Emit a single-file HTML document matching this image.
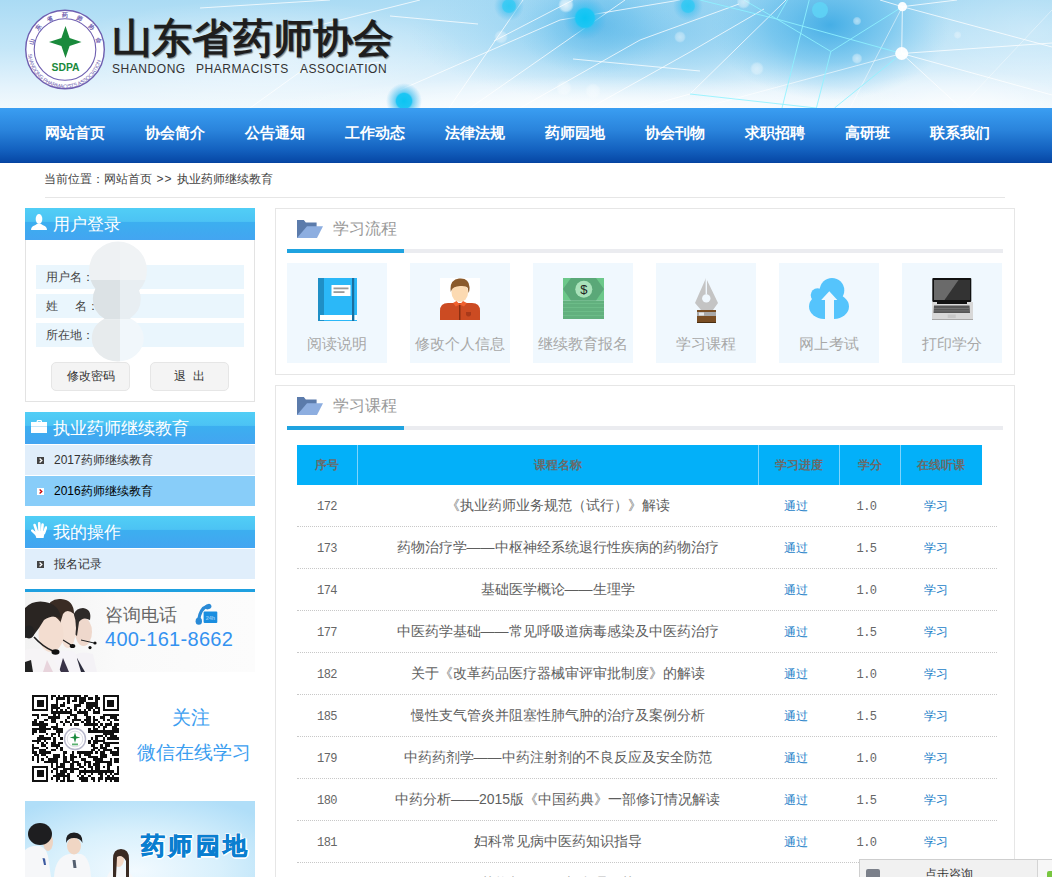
<!DOCTYPE html>
<html><head><meta charset="utf-8">
<style>
*{margin:0;padding:0;box-sizing:border-box}
html,body{width:1052px;height:877px;overflow:hidden;background:#fff;font-family:"Liberation Sans",sans-serif;color:#333;font-size:12px}
.abs{position:absolute}
#banner{position:absolute;left:0;top:0;width:1052px;height:108px;overflow:hidden;
background:linear-gradient(180deg,#a9daf5 0%,#c4e6f8 55%,#eaf6fd 100%)}
#nav{position:absolute;left:0;top:108px;width:1052px;height:55px;
background:linear-gradient(180deg,#3a9ef2 0%,#2a84dc 40%,#1462c0 75%,#0748a6 98%,#04409c 100%)}
#nav span{position:absolute;top:16px;color:#fff;font-size:15px;font-weight:bold;line-height:18px;white-space:nowrap}
.crumb{position:absolute;left:44px;top:171px;font-size:12px;color:#444;line-height:16px}
.crumbline{position:absolute;left:45px;top:197px;width:960px;height:1px;background:#e6e6e6}
.shead{position:absolute;left:25px;width:230px;height:32px;
background:linear-gradient(180deg,#51cef6 0%,#4cc3f4 42%,#3caff0 44%,#3faaf0 70%,#43a5f1 100%)}
.shead .t{position:absolute;left:28px;top:6px;color:#fff;font-size:17px;line-height:22px;white-space:nowrap}
.item{position:absolute;left:25px;width:230px;height:30px;background:#e0eefb}
.item .t{position:absolute;left:29px;top:8px;font-size:12px;line-height:14px;color:#333;white-space:nowrap}
.item .b{position:absolute;left:12px;top:12px}
.fr{position:absolute;left:36px;width:208px;height:24px;background:#eaf6fd}
.fr span{position:absolute;top:5px;font-size:12px;line-height:14px;color:#444;white-space:nowrap}
.btn{position:absolute;top:362px;width:79px;height:29px;border:1px solid #e6e6e6;border-radius:5px;background:#f4f4f4;text-align:center;font-size:12px;line-height:27px;color:#333}
.box{position:absolute;left:275px;width:740px;border:1px solid #e6e6e6;background:#fff}
.tile{position:absolute;top:263px;width:100px;height:100px;background:#f0f8fe}
.tile .l{position:absolute;left:0;width:100px;top:73px;text-align:center;font-size:14.5px;color:#a8a8a8;line-height:16px;white-space:nowrap}
table{border-collapse:collapse}
.th{position:absolute;top:458px;text-align:center;font-size:12px;font-weight:bold;color:#6a6a6a;line-height:14px}
.tr{position:absolute;left:297px;width:700px;height:42px;border-bottom:1px dotted #c8c8c8}
.td{position:absolute;top:14px;font-size:12px;line-height:14px;text-align:center;white-space:nowrap}
.td.n{left:0;width:60px;font-family:"Liberation Mono",monospace;font-size:12px;letter-spacing:-0.5px;top:15px;color:#666}
.td.nm{left:60px;width:401px;color:#5e5e5e;font-size:14px;top:12px;line-height:16px}
.td.p{left:458px;width:81px;color:#1a7ec8}
.td.c{left:539px;width:61px;font-family:"Liberation Mono",monospace;font-size:12px;letter-spacing:-0.5px;top:15px;color:#666}
.td.s{left:598px;width:82px;color:#1a7ec8}
.sub{position:absolute;top:62px;font-size:12px;line-height:14px;letter-spacing:0.55px;color:#333;white-space:nowrap}
</style></head>
<body>
<div id="banner"><svg width="1052" height="108" viewBox="0 0 1052 108" style="position:absolute;left:0;top:0">
<defs>
<linearGradient id="bgv" x1="0" y1="0" x2="0" y2="1">
<stop offset="0" stop-color="#aadbf4"/><stop offset="0.45" stop-color="#c4e6f8"/><stop offset="0.8" stop-color="#e4f3fc"/><stop offset="1" stop-color="#f2f9fd"/></linearGradient>
<radialGradient id="rb1" cx="0.5" cy="0.5" r="0.5"><stop offset="0" stop-color="#3aa9e4" stop-opacity="0.95"/><stop offset="0.5" stop-color="#55b8ea" stop-opacity="0.6"/><stop offset="1" stop-color="#7ccaf0" stop-opacity="0"/></radialGradient>
<radialGradient id="rw" cx="0.5" cy="0.5" r="0.5"><stop offset="0" stop-color="#ffffff" stop-opacity="0.95"/><stop offset="1" stop-color="#ffffff" stop-opacity="0"/></radialGradient>
<radialGradient id="dot" cx="0.5" cy="0.5" r="0.5"><stop offset="0" stop-color="#0cc4f2"/><stop offset="0.42" stop-color="#1ec6f4"/><stop offset="0.5" stop-color="#3cc0f0" stop-opacity="0.7"/><stop offset="1" stop-color="#50b8ee" stop-opacity="0"/></radialGradient>
<radialGradient id="wdot" cx="0.5" cy="0.5" r="0.5"><stop offset="0" stop-color="#fff" stop-opacity="0.75"/><stop offset="0.7" stop-color="#fff" stop-opacity="0.5"/><stop offset="1" stop-color="#fff" stop-opacity="0"/></radialGradient>
</defs>
<rect width="1052" height="108" fill="url(#bgv)"/>
<ellipse cx="640" cy="35" rx="230" ry="70" fill="url(#rb1)" opacity="0.45"/>
<ellipse cx="830" cy="25" rx="120" ry="75" fill="url(#rb1)" opacity="0.95"/>
<ellipse cx="595" cy="25" rx="80" ry="50" fill="url(#rb1)" opacity="0.55"/>
<ellipse cx="1030" cy="30" rx="110" ry="70" fill="url(#rw)" opacity="0.25"/>
<ellipse cx="260" cy="55" rx="210" ry="55" fill="url(#rw)" opacity="0.5"/>
<ellipse cx="600" cy="116" rx="360" ry="40" fill="url(#rw)" opacity="0.95"/>
<ellipse cx="960" cy="110" rx="120" ry="40" fill="url(#rw)" opacity="0.8"/>
<g stroke="#ffffff" stroke-opacity="0.75" stroke-width="1" fill="none">
<path d="M449 108L523 0"/><path d="M470 108L625 0"/><path d="M400 90L560 20L680 0"/>
<path d="M390 16L478 24"/><path d="M573 59L700 71"/><path d="M494 41L573 0"/>
<path d="M520 108L640 40L739 4"/><path d="M590 108L690 52L764 9"/>
<path d="M640 108L690 94L786 0"/>
<path d="M300 30L420 0"/><path d="M200 8L330 0"/><path d="M250 108L300 72L380 62"/>
<path d="M902.4 6.7L1052 47"/><path d="M902.4 6.7L880 0"/><path d="M902.4 6.7L957 0"/><path d="M902.4 6.7L901.7 53.5"/>
<path d="M901.7 53.5L961 108"/><path d="M901.7 53.5L1052 43"/><path d="M901.7 53.5L1052 95"/>
<path d="M902.4 6.7L850 108" stroke-opacity="0.5"/><path d="M960 108L1052 10" stroke-opacity="0.4"/>
<path d="M700 108L901.7 53.5" stroke-opacity="0.6"/>
</g>
<g stroke="#8ef2ff" stroke-opacity="0.85" stroke-width="1" fill="none">
<path d="M776.7 19L901.7 53.5"/><path d="M776.7 19L744 0"/><path d="M776.7 19L787.5 0"/><path d="M776.7 19L830.9 51.5"/>
<path d="M830.9 51.5L902.4 6.7"/><path d="M830.9 51.5L816.4 108"/><path d="M809.2 0L782 108"/>
<path d="M690 94L816 108"/><path d="M834.5 108L901.7 53.5"/><path d="M700 0L776.7 19"/>
</g>
<circle cx="585" cy="18" r="22" fill="url(#dot)"/>
<circle cx="509" cy="6" r="15" fill="url(#dot)" opacity="0.75"/>
<circle cx="688" cy="6" r="15" fill="url(#dot)" opacity="0.75"/>
<circle cx="404" cy="101" r="18" fill="url(#dot)"/>
<circle cx="820" cy="10" r="8" fill="#5fd6f6" fill-opacity="0.8"/>
<circle cx="902.4" cy="6.7" r="4.6" fill="#fff" fill-opacity="0.95"/>
<circle cx="901.7" cy="53.5" r="6.5" fill="#fff" fill-opacity="0.95"/>
<circle cx="566" cy="5" r="8" fill="url(#wdot)"/><circle cx="501" cy="37" r="7" fill="url(#wdot)" opacity="0.6"/>
<circle cx="680" cy="37" r="6" fill="url(#wdot)" opacity="0.6"/><circle cx="564" cy="88" r="8" fill="url(#wdot)" opacity="0.6"/>
<circle cx="593" cy="91" r="8" fill="url(#wdot)" opacity="0.5"/><circle cx="757" cy="68.6" r="7" fill="url(#wdot)" opacity="0.6"/>
<circle cx="857" cy="21" r="4.5" fill="url(#wdot)" opacity="0.7"/><circle cx="857" cy="58.5" r="5.5" fill="url(#wdot)" opacity="0.7"/>
<circle cx="743.5" cy="2" r="7" fill="url(#wdot)" opacity="0.7"/><circle cx="957.6" cy="35" r="4" fill="url(#wdot)" opacity="0.5"/>
</svg>
<!-- logo -->
<svg style="position:absolute;left:25px;top:9px" width="81" height="81" viewBox="0 0 81 81">
<circle cx="40" cy="40.5" r="39.3" fill="#fff" stroke="#6f5fb0" stroke-width="1.4"/>
<circle cx="40" cy="40.5" r="30.8" fill="none" stroke="#6f5fb0" stroke-width="1.1"/>
<path d="M40.5 17L44.6 28.9L56.5 33L44.6 37.1L40.5 49L36.4 37.1L24 33L36.4 28.9z" fill="#1a8a3c"/>
<text x="40.5" y="61.8" text-anchor="middle" font-family="Liberation Sans" font-size="11.5" font-weight="bold" textLength="28" lengthAdjust="spacingAndGlyphs" fill="#1a8a3c">SDPA</text>
<g fill="#6f5fb0" font-family="Liberation Sans" font-size="6" font-weight="bold" text-anchor="middle"><text x="0" y="2.2" transform="translate(6.23 32.08) rotate(-76)">山</text><text x="0" y="2.2" transform="translate(12.96 18.60) rotate(-51)">东</text><text x="0" y="2.2" transform="translate(24.74 9.22) rotate(-26)">省</text><text x="0" y="2.2" transform="translate(40.00 5.70) rotate(0)">药</text><text x="0" y="2.2" transform="translate(54.71 8.96) rotate(25)">师</text><text x="0" y="2.2" transform="translate(66.66 18.13) rotate(50)">协</text><text x="0" y="2.2" transform="translate(73.61 31.49) rotate(75)">会</text></g>
<path id="arcp" d="M2.8 42A37.2 37.2 0 0 0 77.2 42" fill="none"/>
<text font-family="Liberation Sans" font-size="5.4" fill="#6f5fb0"><textPath href="#arcp" startOffset="3" textLength="104" lengthAdjust="spacing">SHANDONG PHARMACISTS ASSOCIATION</textPath></text>
</svg>
<div style="position:absolute;left:112px;top:14px;font-size:40px;line-height:48px;font-weight:bold;color:#1e1e1e;letter-spacing:0.2px;white-space:nowrap;text-shadow:1px 1px 1px rgba(0,0,0,0.45)">山东省药师协会</div>
<div class="sub" style="left:112px">SHANDONG</div><div class="sub" style="left:196px">PHARMACISTS</div><div class="sub" style="left:300px">ASSOCIATION</div>
</div>
<div id="nav">
<span style="left:45px">网站首页</span>
<span style="left:145px">协会简介</span>
<span style="left:245px">公告通知</span>
<span style="left:345px">工作动态</span>
<span style="left:445px">法律法规</span>
<span style="left:545px">药师园地</span>
<span style="left:645px">协会刊物</span>
<span style="left:745px">求职招聘</span>
<span style="left:845px">高研班</span>
<span style="left:930px">联系我们</span>
</div>
<div class="crumb">当前位置：网站首页<span style="display:inline-block;width:25px;text-align:center;letter-spacing:1px">&gt;&gt;</span>执业药师继续教育</div>
<div class="crumbline"></div>

<!-- sidebar -->
<div class="shead" style="top:208px"><div class="t">用户登录</div></div>
<div class="abs" style="left:25px;top:240px;width:230px;height:162px;border:1px solid #e3e3e3;border-top:none"></div>

<div class="shead" style="top:412px"><div class="t">执业药师继续教育</div></div>
<div class="item" style="top:445px"><svg class="b" width="7" height="7" viewBox="0 0 7 7"><rect width="7" height="7" fill="#444"/><path d="M2.6 1.5L4.8 3.5L2.6 5.5" fill="none" stroke="#fff" stroke-width="1.3"/></svg><div class="t">2017药师继续教育</div></div>
<div class="item" style="top:476px;background:#88cdf9"><svg class="b" width="7" height="7" viewBox="0 0 7 7"><rect width="7" height="7" fill="#fff"/><path d="M2.6 1.5L4.8 3.5L2.6 5.5" fill="none" stroke="#c00" stroke-width="1.3"/></svg><div class="t" style="color:#000">2016药师继续教育</div></div>

<div class="shead" style="top:516px"><div class="t">我的操作</div></div>
<div class="item" style="top:549px"><svg class="b" width="7" height="7" viewBox="0 0 7 7"><rect width="7" height="7" fill="#444"/><path d="M2.6 1.5L4.8 3.5L2.6 5.5" fill="none" stroke="#fff" stroke-width="1.3"/></svg><div class="t">报名记录</div></div>

<!-- main -->
<div class="box" style="top:208px;height:167px"></div>
<div class="box" style="top:385px;height:500px"></div>


<!-- sidebar icons -->
<svg class="abs" style="left:31px;top:214px" width="16" height="16" viewBox="0 0 16 16">
<ellipse cx="8" cy="5" rx="3.3" ry="5" fill="#fff"/>
<path d="M0 16Q0 12.5 4 11.2L6.3 9.8H9.7L12 11.2Q16 12.5 16 16z" fill="#fff"/>
</svg>
<svg class="abs" style="left:31px;top:420px" width="16" height="13" viewBox="0 0 16 13">
<rect x="6.2" y="0.6" width="4.2" height="2.4" rx="0.8" fill="none" stroke="#fff" stroke-width="1.2"/>
<rect x="0" y="2" width="16" height="11" fill="#fff"/>
<rect x="0" y="6.2" width="16" height="0.8" fill="#b8e0f8"/>
</svg>
<svg class="abs" style="left:31px;top:522px" width="16" height="16" viewBox="0 0 16 16">
<g stroke="#fff" stroke-width="2.6" stroke-linecap="round">
<line x1="1.3" y1="8.6" x2="5.5" y2="12.5"/><line x1="3.6" y1="3" x2="6" y2="10"/>
<line x1="8.2" y1="1.3" x2="8.5" y2="9"/><line x1="11.6" y1="2.6" x2="11" y2="9"/>
<line x1="15" y1="5.5" x2="13" y2="11"/></g>
<path d="M4.6 9H13.8L12.6 16H5.3L4 11.5z" fill="#fff"/>
</svg>
<!-- login fields -->
<div class="fr" style="top:265px"><span style="left:10px">用户名：</span></div>
<div class="fr" style="top:294px"><span style="left:10px">姓</span><span style="left:39px">名：</span></div>
<div class="fr" style="top:323px"><span style="left:10px">所在地：</span></div>
<svg class="abs" style="left:85px;top:238px" width="65" height="126" viewBox="85 238 65 126">
<defs><clipPath id="blob"><circle cx="118" cy="270.5" r="29"/><ellipse cx="116.8" cy="299" rx="24" ry="23"/><ellipse cx="117.8" cy="338.5" rx="26" ry="23"/></clipPath></defs>
<g clip-path="url(#blob)">
<rect x="85" y="238" width="35" height="42" fill="#eef1f3"/><rect x="120" y="238" width="35" height="42" fill="#f0f3f5"/>
<rect x="85" y="280" width="35" height="39.5" fill="#dce2e5"/><rect x="120" y="280" width="35" height="39.5" fill="#e8eef2"/>
<rect x="85" y="319.5" width="35" height="50" fill="#e7ebed"/><rect x="120" y="319.5" width="35" height="50" fill="#f1f7fb"/>
</g></svg>
<div class="btn" style="left:51px">修改密码</div>
<div class="btn" style="left:150px">退&nbsp;&nbsp;出</div>

<!-- phone banner -->
<div class="abs" style="left:25px;top:589px;width:230px;height:3.5px;background:#1fa0e0"></div>
<div class="abs" style="left:25px;top:592px;width:230px;height:80px;background:linear-gradient(90deg,#f2f2f2 0%,#fafafa 40%,#fcfcfc 100%);overflow:hidden">
<svg width="230" height="80" viewBox="0 0 230 80" style="position:absolute;left:0;top:0">
<!-- person 3 (back, right) -->
<path d="M44 80L48 64Q56 58 68 62L72 80z" fill="#f4f2f6"/>
<path d="M48 80L52 66L60 80z" fill="#2c2c3c"/>
<ellipse cx="58.5" cy="40" rx="8.5" ry="14" fill="#efd8cc"/>
<path d="M47 40Q45 16 58 16Q67 17 65 28Q58 24 54 30L52 44z" fill="#2e2a28"/>
<path d="M56 48L69 51" stroke="#222" stroke-width="1" fill="none"/><circle cx="70" cy="51" r="1.6" fill="#111"/><circle cx="65" cy="55.6" r="1.6" fill="#111"/>
<!-- person 2 -->
<path d="M22 80L26 64Q36 56 50 60L56 80z" fill="#f6f4f8"/>
<path d="M34 80L38 66L44 80z" fill="#3a3448"/>
<ellipse cx="43" cy="36" rx="8" ry="20" fill="#f4e0d4"/>
<path d="M22 18Q24 6 36 7Q49 8 49 22Q42 16 38 22L35 32z" fill="#3a2c24"/>
<path d="M38 48L46 53" stroke="#222" stroke-width="1.2" fill="none"/><ellipse cx="47.5" cy="54" rx="2.8" ry="2" fill="#111"/>
<!-- person 1 (front, left) -->
<path d="M0 80V58Q10 54 24 60L36 80z" fill="#f6f4f6"/>
<path d="M0 80V70L6 68L8 80z" fill="#222"/><path d="M18 80L22 68L28 80z" fill="#e8d4dc"/>
<ellipse cx="26" cy="42" rx="12.5" ry="18" fill="#f3ddd0"/>
<path d="M0 36V16Q8 8 20 10Q34 12 36 26Q27 22 19 28L14 36L8 44L0 46z" fill="#2a2522"/>
<ellipse cx="4" cy="40" rx="5.5" ry="6.5" fill="#222"/>
<path d="M9 45Q18 55 28 59" stroke="#222" stroke-width="1.6" fill="none"/><ellipse cx="30.5" cy="60" rx="4" ry="2.8" fill="#111"/>
</svg>
<div style="position:absolute;left:80px;top:13px;font-size:17.5px;line-height:20px;color:#666;white-space:nowrap">咨询电话</div>
<svg style="position:absolute;left:170px;top:11px" width="24" height="23" viewBox="0 0 24 23">
<path d="M12.5 3Q5 5.5 3.6 17.5" fill="none" stroke="#2a8ad6" stroke-width="3.2"/>
<ellipse cx="13.2" cy="3.6" rx="3.3" ry="2.6" transform="rotate(-20 13.2 3.6)" fill="#2a8ad6"/>
<ellipse cx="3.8" cy="18.2" rx="3.2" ry="3.6" fill="#2a8ad6"/>
<rect x="8.6" y="8.4" width="13.7" height="11.6" rx="1" fill="#1a8ee0"/>
<text x="15.4" y="16.6" text-anchor="middle" font-family="Liberation Sans" font-size="5.5" font-weight="bold" fill="#8cc8f4">24h</text>
</svg>
<div style="position:absolute;left:80px;top:36px;font-size:20px;line-height:22px;color:#3492f0;letter-spacing:0.3px;white-space:nowrap">400-161-8662</div>
</div>
<!-- QR -->
<svg class="abs" style="left:32px;top:695px" width="87" height="87" viewBox="0 0 37 37" shape-rendering="crispEdges">
<path d="M0 0h1v1h-1zM1 0h1v1h-1zM2 0h1v1h-1zM3 0h1v1h-1zM4 0h1v1h-1zM5 0h1v1h-1zM6 0h1v1h-1zM8 0h1v1h-1zM9 0h1v1h-1zM11 0h1v1h-1zM13 0h1v1h-1zM14 0h1v1h-1zM15 0h1v1h-1zM16 0h1v1h-1zM17 0h1v1h-1zM18 0h1v1h-1zM19 0h1v1h-1zM20 0h1v1h-1zM22 0h1v1h-1zM23 0h1v1h-1zM27 0h1v1h-1zM30 0h1v1h-1zM31 0h1v1h-1zM32 0h1v1h-1zM33 0h1v1h-1zM34 0h1v1h-1zM35 0h1v1h-1zM36 0h1v1h-1zM0 1h1v1h-1zM6 1h1v1h-1zM8 1h1v1h-1zM10 1h1v1h-1zM11 1h1v1h-1zM12 1h1v1h-1zM13 1h1v1h-1zM15 1h1v1h-1zM18 1h1v1h-1zM20 1h1v1h-1zM21 1h1v1h-1zM22 1h1v1h-1zM24 1h1v1h-1zM25 1h1v1h-1zM27 1h1v1h-1zM28 1h1v1h-1zM30 1h1v1h-1zM36 1h1v1h-1zM0 2h1v1h-1zM2 2h1v1h-1zM3 2h1v1h-1zM4 2h1v1h-1zM6 2h1v1h-1zM10 2h1v1h-1zM15 2h1v1h-1zM17 2h1v1h-1zM18 2h1v1h-1zM20 2h1v1h-1zM21 2h1v1h-1zM22 2h1v1h-1zM27 2h1v1h-1zM30 2h1v1h-1zM32 2h1v1h-1zM33 2h1v1h-1zM34 2h1v1h-1zM36 2h1v1h-1zM0 3h1v1h-1zM2 3h1v1h-1zM3 3h1v1h-1zM4 3h1v1h-1zM6 3h1v1h-1zM10 3h1v1h-1zM13 3h1v1h-1zM15 3h1v1h-1zM20 3h1v1h-1zM21 3h1v1h-1zM23 3h1v1h-1zM24 3h1v1h-1zM25 3h1v1h-1zM26 3h1v1h-1zM27 3h1v1h-1zM30 3h1v1h-1zM32 3h1v1h-1zM33 3h1v1h-1zM34 3h1v1h-1zM36 3h1v1h-1zM0 4h1v1h-1zM2 4h1v1h-1zM3 4h1v1h-1zM4 4h1v1h-1zM6 4h1v1h-1zM8 4h1v1h-1zM9 4h1v1h-1zM10 4h1v1h-1zM12 4h1v1h-1zM13 4h1v1h-1zM18 4h1v1h-1zM19 4h1v1h-1zM20 4h1v1h-1zM23 4h1v1h-1zM24 4h1v1h-1zM25 4h1v1h-1zM26 4h1v1h-1zM27 4h1v1h-1zM30 4h1v1h-1zM32 4h1v1h-1zM33 4h1v1h-1zM34 4h1v1h-1zM36 4h1v1h-1zM0 5h1v1h-1zM6 5h1v1h-1zM8 5h1v1h-1zM9 5h1v1h-1zM10 5h1v1h-1zM11 5h1v1h-1zM15 5h1v1h-1zM18 5h1v1h-1zM23 5h1v1h-1zM24 5h1v1h-1zM25 5h1v1h-1zM27 5h1v1h-1zM28 5h1v1h-1zM30 5h1v1h-1zM36 5h1v1h-1zM0 6h1v1h-1zM1 6h1v1h-1zM2 6h1v1h-1zM3 6h1v1h-1zM4 6h1v1h-1zM5 6h1v1h-1zM6 6h1v1h-1zM8 6h1v1h-1zM10 6h1v1h-1zM12 6h1v1h-1zM14 6h1v1h-1zM16 6h1v1h-1zM18 6h1v1h-1zM20 6h1v1h-1zM22 6h1v1h-1zM24 6h1v1h-1zM26 6h1v1h-1zM28 6h1v1h-1zM30 6h1v1h-1zM31 6h1v1h-1zM32 6h1v1h-1zM33 6h1v1h-1zM34 6h1v1h-1zM35 6h1v1h-1zM36 6h1v1h-1zM8 7h1v1h-1zM9 7h1v1h-1zM10 7h1v1h-1zM11 7h1v1h-1zM12 7h1v1h-1zM13 7h1v1h-1zM14 7h1v1h-1zM15 7h1v1h-1zM16 7h1v1h-1zM19 7h1v1h-1zM20 7h1v1h-1zM21 7h1v1h-1zM22 7h1v1h-1zM23 7h1v1h-1zM26 7h1v1h-1zM27 7h1v1h-1zM28 7h1v1h-1zM0 8h1v1h-1zM1 8h1v1h-1zM2 8h1v1h-1zM4 8h1v1h-1zM5 8h1v1h-1zM6 8h1v1h-1zM9 8h1v1h-1zM11 8h1v1h-1zM16 8h1v1h-1zM17 8h1v1h-1zM18 8h1v1h-1zM22 8h1v1h-1zM23 8h1v1h-1zM30 8h1v1h-1zM31 8h1v1h-1zM32 8h1v1h-1zM33 8h1v1h-1zM34 8h1v1h-1zM35 8h1v1h-1zM36 8h1v1h-1zM2 9h1v1h-1zM7 9h1v1h-1zM8 9h1v1h-1zM9 9h1v1h-1zM10 9h1v1h-1zM11 9h1v1h-1zM15 9h1v1h-1zM18 9h1v1h-1zM23 9h1v1h-1zM24 9h1v1h-1zM26 9h1v1h-1zM29 9h1v1h-1zM30 9h1v1h-1zM33 9h1v1h-1zM34 9h1v1h-1zM35 9h1v1h-1zM1 10h1v1h-1zM5 10h1v1h-1zM6 10h1v1h-1zM8 10h1v1h-1zM9 10h1v1h-1zM14 10h1v1h-1zM17 10h1v1h-1zM18 10h1v1h-1zM19 10h1v1h-1zM20 10h1v1h-1zM22 10h1v1h-1zM23 10h1v1h-1zM24 10h1v1h-1zM26 10h1v1h-1zM27 10h1v1h-1zM30 10h1v1h-1zM32 10h1v1h-1zM35 10h1v1h-1zM36 10h1v1h-1zM0 11h1v1h-1zM1 11h1v1h-1zM3 11h1v1h-1zM4 11h1v1h-1zM8 11h1v1h-1zM9 11h1v1h-1zM12 11h1v1h-1zM14 11h1v1h-1zM15 11h1v1h-1zM17 11h1v1h-1zM21 11h1v1h-1zM23 11h1v1h-1zM24 11h1v1h-1zM26 11h1v1h-1zM28 11h1v1h-1zM33 11h1v1h-1zM0 12h1v1h-1zM1 12h1v1h-1zM2 12h1v1h-1zM3 12h1v1h-1zM4 12h1v1h-1zM5 12h1v1h-1zM6 12h1v1h-1zM10 12h1v1h-1zM13 12h1v1h-1zM16 12h1v1h-1zM18 12h1v1h-1zM19 12h1v1h-1zM22 12h1v1h-1zM23 12h1v1h-1zM24 12h1v1h-1zM25 12h1v1h-1zM26 12h1v1h-1zM27 12h1v1h-1zM29 12h1v1h-1zM31 12h1v1h-1zM32 12h1v1h-1zM33 12h1v1h-1zM35 12h1v1h-1zM36 12h1v1h-1zM3 13h1v1h-1zM4 13h1v1h-1zM5 13h1v1h-1zM8 13h1v1h-1zM9 13h1v1h-1zM10 13h1v1h-1zM26 13h1v1h-1zM28 13h1v1h-1zM30 13h1v1h-1zM31 13h1v1h-1zM34 13h1v1h-1zM35 13h1v1h-1zM0 14h1v1h-1zM1 14h1v1h-1zM2 14h1v1h-1zM3 14h1v1h-1zM4 14h1v1h-1zM5 14h1v1h-1zM6 14h1v1h-1zM7 14h1v1h-1zM9 14h1v1h-1zM10 14h1v1h-1zM11 14h1v1h-1zM12 14h1v1h-1zM24 14h1v1h-1zM26 14h1v1h-1zM27 14h1v1h-1zM30 14h1v1h-1zM34 14h1v1h-1zM35 14h1v1h-1zM36 14h1v1h-1zM0 15h1v1h-1zM1 15h1v1h-1zM3 15h1v1h-1zM4 15h1v1h-1zM5 15h1v1h-1zM10 15h1v1h-1zM11 15h1v1h-1zM12 15h1v1h-1zM24 15h1v1h-1zM25 15h1v1h-1zM26 15h1v1h-1zM27 15h1v1h-1zM28 15h1v1h-1zM29 15h1v1h-1zM30 15h1v1h-1zM31 15h1v1h-1zM32 15h1v1h-1zM33 15h1v1h-1zM34 15h1v1h-1zM35 15h1v1h-1zM36 15h1v1h-1zM0 16h1v1h-1zM6 16h1v1h-1zM8 16h1v1h-1zM9 16h1v1h-1zM11 16h1v1h-1zM30 16h1v1h-1zM31 16h1v1h-1zM32 16h1v1h-1zM33 16h1v1h-1zM34 16h1v1h-1zM3 17h1v1h-1zM4 17h1v1h-1zM8 17h1v1h-1zM11 17h1v1h-1zM27 17h1v1h-1zM28 17h1v1h-1zM29 17h1v1h-1zM31 17h1v1h-1zM33 17h1v1h-1zM34 17h1v1h-1zM35 17h1v1h-1zM2 18h1v1h-1zM3 18h1v1h-1zM4 18h1v1h-1zM5 18h1v1h-1zM6 18h1v1h-1zM7 18h1v1h-1zM9 18h1v1h-1zM12 18h1v1h-1zM25 18h1v1h-1zM27 18h1v1h-1zM30 18h1v1h-1zM32 18h1v1h-1zM33 18h1v1h-1zM34 18h1v1h-1zM35 18h1v1h-1zM36 18h1v1h-1zM0 19h1v1h-1zM1 19h1v1h-1zM2 19h1v1h-1zM3 19h1v1h-1zM5 19h1v1h-1zM9 19h1v1h-1zM24 19h1v1h-1zM26 19h1v1h-1zM27 19h1v1h-1zM28 19h1v1h-1zM29 19h1v1h-1zM30 19h1v1h-1zM2 20h1v1h-1zM4 20h1v1h-1zM6 20h1v1h-1zM8 20h1v1h-1zM9 20h1v1h-1zM11 20h1v1h-1zM12 20h1v1h-1zM24 20h1v1h-1zM26 20h1v1h-1zM27 20h1v1h-1zM30 20h1v1h-1zM31 20h1v1h-1zM32 20h1v1h-1zM33 20h1v1h-1zM34 20h1v1h-1zM35 20h1v1h-1zM36 20h1v1h-1zM0 21h1v1h-1zM4 21h1v1h-1zM5 21h1v1h-1zM8 21h1v1h-1zM9 21h1v1h-1zM10 21h1v1h-1zM11 21h1v1h-1zM25 21h1v1h-1zM26 21h1v1h-1zM29 21h1v1h-1zM31 21h1v1h-1zM32 21h1v1h-1zM0 22h1v1h-1zM1 22h1v1h-1zM2 22h1v1h-1zM6 22h1v1h-1zM10 22h1v1h-1zM12 22h1v1h-1zM26 22h1v1h-1zM27 22h1v1h-1zM29 22h1v1h-1zM30 22h1v1h-1zM31 22h1v1h-1zM35 22h1v1h-1zM36 22h1v1h-1zM0 23h1v1h-1zM3 23h1v1h-1zM4 23h1v1h-1zM5 23h1v1h-1zM8 23h1v1h-1zM9 23h1v1h-1zM12 23h1v1h-1zM25 23h1v1h-1zM26 23h1v1h-1zM28 23h1v1h-1zM30 23h1v1h-1zM31 23h1v1h-1zM32 23h1v1h-1zM33 23h1v1h-1zM36 23h1v1h-1zM0 24h1v1h-1zM1 24h1v1h-1zM3 24h1v1h-1zM4 24h1v1h-1zM5 24h1v1h-1zM6 24h1v1h-1zM7 24h1v1h-1zM13 24h1v1h-1zM14 24h1v1h-1zM17 24h1v1h-1zM19 24h1v1h-1zM20 24h1v1h-1zM21 24h1v1h-1zM22 24h1v1h-1zM23 24h1v1h-1zM24 24h1v1h-1zM25 24h1v1h-1zM27 24h1v1h-1zM29 24h1v1h-1zM30 24h1v1h-1zM33 24h1v1h-1zM34 24h1v1h-1zM35 24h1v1h-1zM36 24h1v1h-1zM1 25h1v1h-1zM2 25h1v1h-1zM4 25h1v1h-1zM5 25h1v1h-1zM9 25h1v1h-1zM10 25h1v1h-1zM11 25h1v1h-1zM13 25h1v1h-1zM16 25h1v1h-1zM17 25h1v1h-1zM20 25h1v1h-1zM22 25h1v1h-1zM23 25h1v1h-1zM24 25h1v1h-1zM29 25h1v1h-1zM30 25h1v1h-1zM31 25h1v1h-1zM34 25h1v1h-1zM35 25h1v1h-1zM36 25h1v1h-1zM0 26h1v1h-1zM2 26h1v1h-1zM6 26h1v1h-1zM9 26h1v1h-1zM10 26h1v1h-1zM11 26h1v1h-1zM13 26h1v1h-1zM14 26h1v1h-1zM16 26h1v1h-1zM17 26h1v1h-1zM18 26h1v1h-1zM20 26h1v1h-1zM24 26h1v1h-1zM25 26h1v1h-1zM26 26h1v1h-1zM27 26h1v1h-1zM29 26h1v1h-1zM30 26h1v1h-1zM31 26h1v1h-1zM0 27h1v1h-1zM2 27h1v1h-1zM4 27h1v1h-1zM7 27h1v1h-1zM8 27h1v1h-1zM9 27h1v1h-1zM10 27h1v1h-1zM13 27h1v1h-1zM14 27h1v1h-1zM16 27h1v1h-1zM17 27h1v1h-1zM21 27h1v1h-1zM22 27h1v1h-1zM26 27h1v1h-1zM27 27h1v1h-1zM28 27h1v1h-1zM29 27h1v1h-1zM33 27h1v1h-1zM35 27h1v1h-1zM36 27h1v1h-1zM2 28h1v1h-1zM5 28h1v1h-1zM6 28h1v1h-1zM7 28h1v1h-1zM8 28h1v1h-1zM9 28h1v1h-1zM10 28h1v1h-1zM13 28h1v1h-1zM14 28h1v1h-1zM15 28h1v1h-1zM17 28h1v1h-1zM18 28h1v1h-1zM19 28h1v1h-1zM22 28h1v1h-1zM23 28h1v1h-1zM24 28h1v1h-1zM27 28h1v1h-1zM28 28h1v1h-1zM29 28h1v1h-1zM30 28h1v1h-1zM31 28h1v1h-1zM32 28h1v1h-1zM33 28h1v1h-1zM35 28h1v1h-1zM36 28h1v1h-1zM8 29h1v1h-1zM10 29h1v1h-1zM12 29h1v1h-1zM13 29h1v1h-1zM16 29h1v1h-1zM17 29h1v1h-1zM19 29h1v1h-1zM20 29h1v1h-1zM22 29h1v1h-1zM24 29h1v1h-1zM26 29h1v1h-1zM27 29h1v1h-1zM28 29h1v1h-1zM32 29h1v1h-1zM33 29h1v1h-1zM0 30h1v1h-1zM1 30h1v1h-1zM2 30h1v1h-1zM3 30h1v1h-1zM4 30h1v1h-1zM5 30h1v1h-1zM6 30h1v1h-1zM8 30h1v1h-1zM10 30h1v1h-1zM11 30h1v1h-1zM12 30h1v1h-1zM13 30h1v1h-1zM16 30h1v1h-1zM17 30h1v1h-1zM20 30h1v1h-1zM21 30h1v1h-1zM24 30h1v1h-1zM25 30h1v1h-1zM27 30h1v1h-1zM28 30h1v1h-1zM30 30h1v1h-1zM32 30h1v1h-1zM36 30h1v1h-1zM0 31h1v1h-1zM6 31h1v1h-1zM9 31h1v1h-1zM10 31h1v1h-1zM13 31h1v1h-1zM14 31h1v1h-1zM15 31h1v1h-1zM16 31h1v1h-1zM17 31h1v1h-1zM18 31h1v1h-1zM19 31h1v1h-1zM22 31h1v1h-1zM25 31h1v1h-1zM27 31h1v1h-1zM28 31h1v1h-1zM32 31h1v1h-1zM36 31h1v1h-1zM0 32h1v1h-1zM2 32h1v1h-1zM3 32h1v1h-1zM4 32h1v1h-1zM6 32h1v1h-1zM8 32h1v1h-1zM10 32h1v1h-1zM12 32h1v1h-1zM13 32h1v1h-1zM14 32h1v1h-1zM16 32h1v1h-1zM17 32h1v1h-1zM20 32h1v1h-1zM21 32h1v1h-1zM22 32h1v1h-1zM23 32h1v1h-1zM24 32h1v1h-1zM25 32h1v1h-1zM26 32h1v1h-1zM27 32h1v1h-1zM28 32h1v1h-1zM29 32h1v1h-1zM30 32h1v1h-1zM31 32h1v1h-1zM32 32h1v1h-1zM33 32h1v1h-1zM34 32h1v1h-1zM36 32h1v1h-1zM0 33h1v1h-1zM2 33h1v1h-1zM3 33h1v1h-1zM4 33h1v1h-1zM6 33h1v1h-1zM10 33h1v1h-1zM11 33h1v1h-1zM12 33h1v1h-1zM13 33h1v1h-1zM15 33h1v1h-1zM20 33h1v1h-1zM22 33h1v1h-1zM25 33h1v1h-1zM28 33h1v1h-1zM29 33h1v1h-1zM31 33h1v1h-1zM33 33h1v1h-1zM35 33h1v1h-1zM36 33h1v1h-1zM0 34h1v1h-1zM2 34h1v1h-1zM3 34h1v1h-1zM4 34h1v1h-1zM6 34h1v1h-1zM9 34h1v1h-1zM10 34h1v1h-1zM11 34h1v1h-1zM12 34h1v1h-1zM13 34h1v1h-1zM14 34h1v1h-1zM15 34h1v1h-1zM19 34h1v1h-1zM21 34h1v1h-1zM24 34h1v1h-1zM29 34h1v1h-1zM32 34h1v1h-1zM34 34h1v1h-1zM0 35h1v1h-1zM6 35h1v1h-1zM8 35h1v1h-1zM10 35h1v1h-1zM11 35h1v1h-1zM13 35h1v1h-1zM15 35h1v1h-1zM20 35h1v1h-1zM21 35h1v1h-1zM22 35h1v1h-1zM23 35h1v1h-1zM25 35h1v1h-1zM26 35h1v1h-1zM28 35h1v1h-1zM29 35h1v1h-1zM31 35h1v1h-1zM32 35h1v1h-1zM33 35h1v1h-1zM34 35h1v1h-1zM35 35h1v1h-1zM36 35h1v1h-1zM0 36h1v1h-1zM1 36h1v1h-1zM2 36h1v1h-1zM3 36h1v1h-1zM4 36h1v1h-1zM5 36h1v1h-1zM6 36h1v1h-1zM10 36h1v1h-1zM12 36h1v1h-1zM13 36h1v1h-1zM15 36h1v1h-1zM16 36h1v1h-1zM17 36h1v1h-1zM21 36h1v1h-1zM22 36h1v1h-1zM23 36h1v1h-1zM26 36h1v1h-1zM28 36h1v1h-1zM31 36h1v1h-1zM33 36h1v1h-1zM35 36h1v1h-1zM36 36h1v1h-1z" fill="#111"/></svg>
<svg class="abs" style="left:63px;top:727px" width="24" height="24" viewBox="0 0 24 24">
<rect x="0" y="0" width="24" height="24" fill="#fff"/>
<circle cx="12" cy="12" r="10.5" fill="#fff" stroke="#b8b8cc" stroke-width="1.4"/>
<circle cx="12" cy="12" r="7.8" fill="none" stroke="#d0d0dc" stroke-width="0.7"/>
<path d="M12 5.5L13.2 9.6L17.3 10.6L13.2 11.6L12 15.7L10.8 11.6L6.7 10.6L10.8 9.6z" fill="#1a8a3c"/>
<rect x="9" y="16.5" width="6" height="1.8" fill="#5ab070"/>
</svg>
<div class="abs" style="left:172px;top:708px;font-size:19px;line-height:20px;color:#3c9ef0;white-space:nowrap">关注</div>
<div class="abs" style="left:137px;top:743px;font-size:18.5px;line-height:20px;color:#3c9ef0;white-space:nowrap">微信在线学习</div>
<!-- bottom banner -->
<div class="abs" style="left:25px;top:801px;width:230px;height:76px;overflow:hidden;background:radial-gradient(ellipse 170px 80px at 110px 70px,#f2faff 0%,#d8f0fc 50%,#b0def8 100%)">
<svg width="230" height="76" viewBox="0 0 230 76" style="position:absolute;left:0;top:0">
<path d="M0 76V49Q6 44 15 45Q21 47 23 55L26 76z" fill="#f6f7f9"/>
<path d="M17.5 57L20 57.5L21 64L19 64z" fill="#3c5aa0"/>
<ellipse cx="23" cy="41" rx="5" ry="9" fill="#eed4c2"/>
<ellipse cx="15" cy="33" rx="12" ry="11" fill="#1e1e20"/>
<path d="M29 76Q30 56 44 53H56Q65 56 66 76z" fill="#f6f7f9"/>
<path d="M47.5 59L50.5 59L51.5 67L48.5 67z" fill="#556070"/>
<ellipse cx="49" cy="45" rx="7" ry="8.5" fill="#f0d6c4"/>
<path d="M41 42Q40 31.5 49 31.5Q58 31.5 57.5 42Q55 37 49 37Q43 37 41 42z" fill="#1e1e20"/>
<path d="M82 76Q84 68 93 67Q104 68 108 76z" fill="#f6f7f9"/>
<ellipse cx="93.5" cy="58.5" rx="5.5" ry="7.5" fill="#f2d8c6"/>
<path d="M88 76V58Q88 48 96 48Q104 48 104 58V76H101V60Q97 53 92 56L91 76z" fill="#3a2a22"/>
</svg>
<div style="position:absolute;left:116px;top:31px;font-size:23.5px;line-height:28px;font-weight:bold;color:#0a7ed0;letter-spacing:3.4px;white-space:nowrap;-webkit-text-stroke:0.6px #0a7ed0;text-shadow:-1px -1px 0 #fff,1px -1px 0 #fff,-1px 1px 0 #fff,1px 1px 0 #fff,0 1.5px 0 #fff,1.5px 0 0 #fff">药师园地</div>
</div>
<!-- main box 1 -->
<svg class="abs" style="left:297px;top:220px" width="27" height="20" viewBox="0 0 27 20">
<path d="M0 0H6.8L8.8 2.6H19.6V18H0z" fill="#5b7bab"/>
<path d="M10 6.2H26L20 18H0z" fill="#8daee0"/>
</svg>
<div class="abs" style="left:333px;top:219px;font-size:16px;line-height:20px;color:#999">学习流程</div>
<div class="abs" style="left:287px;top:249px;width:716px;height:4px;background:#ebecf0"></div>
<div class="abs" style="left:287px;top:249px;width:117px;height:4px;background:#1fa3e0"></div>

<div class="tile" style="left:287px"><div class="l">阅读说明</div></div>
<div class="tile" style="left:410px"><div class="l">修改个人信息</div></div>
<div class="tile" style="left:533px"><div class="l">继续教育报名</div></div>
<div class="tile" style="left:656px"><div class="l">学习课程</div></div>
<div class="tile" style="left:779px"><div class="l">网上考试</div></div>
<div class="tile" style="left:902px"><div class="l">打印学分</div></div>


<svg class="abs" style="left:318px;top:278px" width="39" height="43" viewBox="0 0 39 43">
<rect width="39" height="43" fill="#2bb8f8"/><rect width="6" height="43" fill="#1f8fc6"/>
<rect x="13.5" y="7" width="19" height="11" fill="#fff"/>
<rect x="15.5" y="9.5" width="15" height="1.8" fill="#9a9a9a"/><rect x="15.5" y="13.2" width="11" height="1.8" fill="#9a9a9a"/>
<rect x="2" y="37" width="32" height="5" fill="#fff"/><rect x="36.3" y="37" width="2.7" height="5" fill="#fff"/>
<rect x="34" y="0" width="2.2" height="43" fill="#1b6e9e"/>
</svg>
<svg class="abs" style="left:440px;top:278px" width="40" height="42" viewBox="0 0 40 42">
<rect width="40" height="42" fill="#fff"/>
<path d="M0 42V33Q0 25 8 25H32Q40 25 40 33V42z" fill="#cc4b22"/>
<ellipse cx="19.8" cy="14.5" rx="8.3" ry="9.5" fill="#fcdab2"/>
<path d="M10.8 14Q9 2 19 0.5Q29 -0.5 29.5 9Q29.8 12 28.5 15L27.8 10Q26.5 7.5 20 8Q13 8.5 11.6 12z" fill="#8b5a2b"/>
<path d="M13 25L16.5 23L19.8 26.5L23 23L26.8 25L24 28.5L19.8 26.5L15.8 28.5z" fill="#f0612e"/>
<rect x="19.2" y="27" width="1.2" height="15" fill="#7a2a10"/>
<path d="M26 34h5v3q-2.5 3-5 0z" fill="#a8391a"/>
</svg>
<svg class="abs" style="left:563px;top:278px" width="41" height="41" viewBox="0 0 41 41">
<rect width="41" height="22.5" fill="#6cc88a"/>
<path d="M8 0H33L41 11L33 22.5H8L0 11z" fill="#5aa878"/>
<circle cx="20.8" cy="11.3" r="8.5" fill="#a9e2ba"/>
<text x="20.8" y="16.2" text-anchor="middle" font-family="Liberation Sans" font-size="13" fill="#222">$</text>
<rect y="22.5" width="41" height="18.5" fill="#62b07e"/>
<rect y="25" width="41" height="1" fill="#6cbc88"/><rect y="29" width="41" height="1" fill="#6cbc88"/><rect y="33" width="41" height="1" fill="#6cbc88"/><rect y="37" width="41" height="1" fill="#6cbc88"/>
</svg>
<svg class="abs" style="left:686px;top:278px" width="40" height="45" viewBox="0 0 40 45">
<path d="M20 0L32 25L27 32H15L9 25Z" fill="#c4c4c4"/>
<circle cx="20.3" cy="20.4" r="4.2" fill="#f0f8fe"/>
<rect x="19.6" y="0" width="1.4" height="16.5" fill="#f0f8fe"/>
<rect x="11" y="32" width="19" height="13" fill="#7a4e24"/>
<rect x="11" y="34" width="19" height="4" fill="#a8a8a8"/>
<rect x="13" y="34.5" width="5" height="3" fill="#e8e8e8"/>
<rect x="11" y="44" width="19" height="1" fill="#4a2e10"/>
</svg>
<svg class="abs" style="left:809px;top:278px" width="40" height="41" viewBox="0 0 40 41">
<circle cx="23" cy="12.3" r="12.3" fill="#55c4fc"/>
<circle cx="8.5" cy="17" r="6.8" fill="#55c4fc"/>
<rect x="0" y="16" width="40" height="25" rx="15" ry="14" fill="#55c4fc"/>
<path d="M20.3 13.2L28.3 22H25V41H16V22H12.2z" fill="#f0f8fe"/>
</svg>
<svg class="abs" style="left:932px;top:278px" width="41" height="42" viewBox="0 0 41 42">
<rect x="0" y="24" width="41" height="18" fill="#d8d8d8"/>
<rect x="0" y="41" width="41" height="1" fill="#a8a8a8"/>
<rect x="0.3" y="0" width="39" height="24" rx="1" fill="#111"/>
<rect x="5" y="23" width="30" height="3" fill="#111"/>
<rect x="2" y="2" width="36" height="20" fill="#333"/>
<path d="M2 2H26.5L12.5 22H2z" fill="#6a6a6a"/>
<path d="M2 27.5H37.5L38 35H1.5z" fill="#555"/>
<rect x="2" y="30" width="36" height="0.8" fill="#777"/><rect x="2" y="32.5" width="36" height="0.8" fill="#777"/>
<rect x="15.7" y="36.5" width="8" height="3.5" fill="#c8c8c8"/>
</svg>
<!-- main box 2 -->
<svg class="abs" style="left:297px;top:397px" width="27" height="20" viewBox="0 0 27 20">
<path d="M0 0H6.8L8.8 2.6H19.6V18H0z" fill="#5b7bab"/>
<path d="M10 6.2H26L20 18H0z" fill="#8daee0"/>
</svg>
<div class="abs" style="left:333px;top:396px;font-size:16px;line-height:20px;color:#999">学习课程</div>
<div class="abs" style="left:287px;top:426px;width:716px;height:4px;background:#ebecf0"></div>
<div class="abs" style="left:287px;top:426px;width:117px;height:4px;background:#1fa3e0"></div>

<div class="abs" style="left:297px;top:445px;width:685px;height:40px;background:#03b0f9"></div>
<div class="abs" style="left:357px;top:445px;width:1px;height:40px;background:#7fd4fc"></div>
<div class="abs" style="left:758px;top:445px;width:1px;height:40px;background:#7fd4fc"></div>
<div class="abs" style="left:839px;top:445px;width:1px;height:40px;background:#7fd4fc"></div>
<div class="abs" style="left:900px;top:445px;width:1px;height:40px;background:#7fd4fc"></div>
<div class="th" style="left:297px;width:60px">序号</div>
<div class="th" style="left:357px;width:401px">课程名称</div>
<div class="th" style="left:758px;width:81px">学习进度</div>
<div class="th" style="left:839px;width:61px">学分</div>
<div class="th" style="left:900px;width:82px">在线听课</div>
<div class="tr" style="top:485px"><div class="td n">172</div><div class="td nm">《执业药师业务规范（试行）》解读</div><div class="td p">通过</div><div class="td c">1.0</div><div class="td s">学习</div></div>
<div class="tr" style="top:527px"><div class="td n">173</div><div class="td nm">药物治疗学——中枢神经系统退行性疾病的药物治疗</div><div class="td p">通过</div><div class="td c">1.5</div><div class="td s">学习</div></div>
<div class="tr" style="top:569px"><div class="td n">174</div><div class="td nm">基础医学概论——生理学</div><div class="td p">通过</div><div class="td c">1.0</div><div class="td s">学习</div></div>
<div class="tr" style="top:611px"><div class="td n">177</div><div class="td nm">中医药学基础——常见呼吸道病毒感染及中医药治疗</div><div class="td p">通过</div><div class="td c">1.5</div><div class="td s">学习</div></div>
<div class="tr" style="top:653px"><div class="td n">182</div><div class="td nm">关于《改革药品医疗器械审评审批制度》的解读</div><div class="td p">通过</div><div class="td c">1.0</div><div class="td s">学习</div></div>
<div class="tr" style="top:695px"><div class="td n">185</div><div class="td nm">慢性支气管炎并阻塞性肺气肿的治疗及案例分析</div><div class="td p">通过</div><div class="td c">1.5</div><div class="td s">学习</div></div>
<div class="tr" style="top:737px"><div class="td n">179</div><div class="td nm">中药药剂学——中药注射剂的不良反应及安全防范</div><div class="td p">通过</div><div class="td c">1.0</div><div class="td s">学习</div></div>
<div class="tr" style="top:779px"><div class="td n">180</div><div class="td nm">中药分析——2015版《中国药典》一部修订情况解读</div><div class="td p">通过</div><div class="td c">1.5</div><div class="td s">学习</div></div>
<div class="tr" style="top:821px"><div class="td n">181</div><div class="td nm">妇科常见病中医药知识指导</div><div class="td p">通过</div><div class="td c">1.0</div><div class="td s">学习</div></div>
<div class="tr" style="top:863px"><div class="td n">183</div><div class="td nm">药物相互作用与合理用药</div><div class="td p">通过</div><div class="td c">1.0</div><div class="td s">学习</div></div>
<!-- chat widget -->
<div class="abs" style="left:859px;top:859px;width:193px;height:18px;background:#f1f1f1;border:1px solid #cfcfcf;border-right:none;border-bottom:none;z-index:5"></div>
<div class="abs" style="left:1037px;top:860px;width:15px;height:17px;background:#f7f7f7;border-left:1px solid #d4d4d4;z-index:6"></div>
<div class="abs" style="left:866px;top:869px;width:14px;height:10px;border-radius:2px;background:#7b808a;z-index:6"></div>
<div class="abs" style="left:925px;top:866px;font-size:12px;line-height:16px;color:#333;white-space:nowrap;z-index:6">点击咨询</div>
<div class="abs" style="left:1047px;top:871px;width:8px;height:8px;border-radius:2px;background:#78c640;z-index:6"></div>
</body></html>
